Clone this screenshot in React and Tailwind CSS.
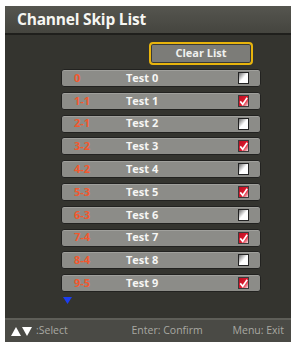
const CHANNELS = [
  { num: '0', name: 'Test 0', skip: false },
  { num: '1-1', name: 'Test 1', skip: true },
  { num: '2-1', name: 'Test 2', skip: false },
  { num: '3-2', name: 'Test 3', skip: true },
  { num: '4-2', name: 'Test 4', skip: false },
  { num: '5-3', name: 'Test 5', skip: true },
  { num: '6-3', name: 'Test 6', skip: false },
  { num: '7-4', name: 'Test 7', skip: true },
  { num: '8-4', name: 'Test 8', skip: false },
  { num: '9-5', name: 'Test 9', skip: true },
];

function Checkbox({ checked }) {
  if (checked) {
    return (
      <span className="block h-[12px] w-[11px] border border-[#3a3a3a]">
        <svg viewBox="0 0 11 12" className="block h-[10px] w-[9px]" preserveAspectRatio="none">
          <defs>
            <linearGradient id="cb" x1="0" y1="0" x2="1" y2="1">
              <stop offset="0" stopColor="#b80f22" />
              <stop offset="0.6" stopColor="#e01a2e" />
              <stop offset="1" stopColor="#f4e4e6" />
            </linearGradient>
          </defs>
          <rect x="0" y="0" width="11" height="12" fill="url(#cb)" />
          <path d="M1.5 6.5 L4.5 10 L10 2" stroke="#fff" strokeWidth="2" fill="none" />
        </svg>
      </span>
    );
  }
  return (
    <span className="block h-[12px] w-[11px] border border-[#222] bg-gradient-to-br from-[#707070] via-[#ffffff] to-[#ffffff]" />
  );
}

export default function App() {
  return (
    <div
      className="h-[346px] w-[295px] bg-white pl-[5px] pt-[6px]"
      style={{ fontFamily: '"Open Sans", "DejaVu Sans", sans-serif' }}
    >
      <div className="flex h-[336px] w-[286px] flex-col bg-[#34342f]">
        <div className="flex h-[27px] items-center bg-gradient-to-b from-[#55554f] to-[#45453f] pl-[12px] text-[15.5px] font-bold tracking-[-0.2px] text-[#f6f6f2]">
          Channel Skip List
        </div>
        <div className="h-[2px] bg-[#1f1f1c]" />
        <div className="flex flex-1 flex-col pt-[7px]">
          <div className="flex justify-end pr-[38px]">
            <div className="flex h-[23px] w-[104px] items-center justify-center rounded-[4px] border-[2px] border-[#e8b40c] bg-[#7c7c78] text-[11px] font-bold text-[#f0f0ee] shadow-[inset_0_0_0_1px_#3a3a36]">
              Clear List
            </div>
          </div>
          <div className="mt-[4px] flex flex-col gap-[4.8px] pl-[56px]">
            {CHANNELS.map((c) => (
              <div
                key={c.num}
                className="flex h-[18px] w-[200px] items-center rounded-[3px] border border-[#222220] bg-[#8c8c88] text-[11px] font-bold shadow-[inset_0_1px_0_#a0a09c]"
              >
                <span className="w-[64px] pl-[12px] text-[#f2582e]">{c.num}</span>
                <span className="flex-1 text-[#f6f6f4]">{c.name}</span>
                <span className="pr-[11px]">
                  <Checkbox checked={c.skip} />
                </span>
              </div>
            ))}
          </div>
          <div className="pl-[58px] pt-[5px]">
            <svg width="9" height="7" viewBox="0 0 9 7">
              <path d="M0 0 H9 L4.5 7 Z" fill="#1c3ef0" />
            </svg>
          </div>
        </div>
        <div className="h-[2px] bg-[#5e5e58]" />
        <div className="flex h-[22px] items-center justify-between bg-[#4a4a45] pl-[6px] pr-[7px] text-[10.5px] text-[#a8a8a2]">
          <span className="flex items-center gap-[4px]">
            <span className="flex items-center gap-[1px]">
              <svg width="10" height="9" viewBox="0 0 10 9">
                <path d="M5 0 L10 9 H0 Z" fill="#fff" />
              </svg>
              <svg width="10" height="9" viewBox="0 0 10 9">
                <path d="M0 0 H10 L5 9 Z" fill="#fff" />
              </svg>
            </span>
            <span>:Select</span>
          </span>
          <span className="pl-[34px]">Enter: Confirm</span>
          <span>Menu: Exit</span>
        </div>
      </div>
    </div>
  );
}
